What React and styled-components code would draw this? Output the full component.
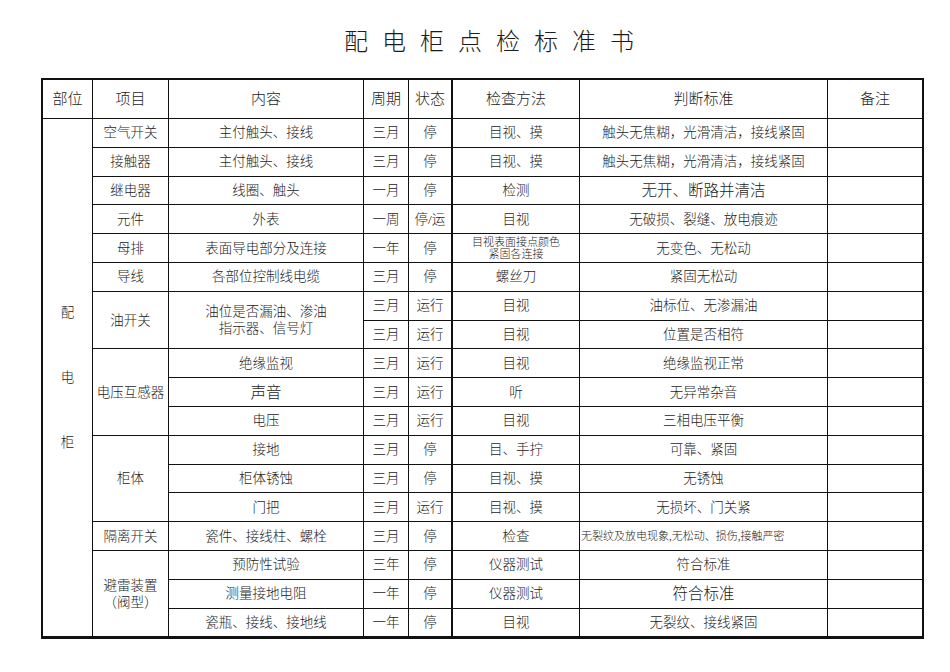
import React from 'react';
import styled, { createGlobalStyle } from 'styled-components';

const Global = createGlobalStyle`
  html, body { margin: 0; padding: 0; background: #fff; }
  body { font-family: "Liberation Serif", "Noto Sans CJK SC", serif; color: #1c1c1c; }
`;

const Page = styled.div`
  width: 950px;
  height: 672px;
  display: flex;
  flex-direction: column;
  box-sizing: border-box;
  padding-top: 27px;
`;

const Title = styled.h1`
  margin: 0 0 21px 0;
  padding-left: 42px;
  font-size: 24px;
  line-height: 30px;
  font-weight: 300;
  letter-spacing: 14px;
  text-align: center;
`;

const Sheet = styled.div`
  margin-left: 41px;
  width: 883px;
  box-sizing: border-box;
  border: 2px solid #111;
  border-right-width: 1px;
  display: grid;
  grid-template-columns: 50px 76px 195px 45px 44px 127px 248px 1fr;
  grid-template-rows: 39px repeat(18, 28.8px);
`;

const sizes = { sm: '11px', md: '13.5px', lg: '15.5px', hd: '15px' };

const Cell = styled.div`
  grid-row: span ${(p) => p.$span || 1};
  box-sizing: border-box;
  display: flex;
  align-items: center;
  justify-content: ${(p) => (p.$align === 'left' ? 'flex-start' : 'center')};
  text-align: center;
  white-space: pre-line;
  padding: 0 ${(p) => (p.$align === 'left' ? '1px' : '2px')};
  border-right: ${(p) => (p.$thick ? 2 : 1)}px solid #111;
  border-bottom: 1px solid #111;
  font-size: ${(p) => sizes[p.$size || 'md']};
  line-height: ${(p) => (p.$size === 'sm' ? '12.5px' : '17px')};
  font-weight: 300;
  overflow: hidden;
`;

const PartCell = styled(Cell)`
  flex-direction: column;
  gap: 49px;
  line-height: 16px;
`;

const headers = ['部位', '项目', '内容', '周期', '状态', '检查方法', '判断标准', '备注'];

const rows = [
  { item: '空气开关', content: '主付触头、接线', period: '三月', state: '停', method: '目视、摸', std: '触头无焦糊，光滑清洁，接线紧固' },
  { item: '接触器', content: '主付触头、接线', period: '三月', state: '停', method: '目视、摸', std: '触头无焦糊，光滑清洁，接线紧固' },
  { item: '继电器', content: '线圈、触头', period: '一月', state: '停', method: '检测', std: { t: '无开、断路并清洁', size: 'lg' } },
  { item: '元件', content: '外表', period: '一周', state: '停/运', method: '目视', std: '无破损、裂缝、放电痕迹' },
  { item: '母排', content: '表面导电部分及连接', period: '一年', state: '停', method: { t: '目视表面接点颜色\n紧固各连接', size: 'sm' }, std: '无变色、无松动' },
  { item: '导线', content: '各部位控制线电缆', period: '三月', state: '停', method: '螺丝刀', std: '紧固无松动' },
  { item: { t: '油开关', span: 2 }, content: { t: '油位是否漏油、渗油\n指示器、信号灯', span: 2 }, period: '三月', state: '运行', method: '目视', std: '油标位、无渗漏油' },
  { item: null, content: null, period: '三月', state: '运行', method: '目视', std: '位置是否相符' },
  { item: { t: '电压互感器', span: 3 }, content: '绝缘监视', period: '三月', state: '运行', method: '目视', std: '绝缘监视正常' },
  { item: null, content: { t: '声音', size: 'lg' }, period: '三月', state: '运行', method: '听', std: '无异常杂音' },
  { item: null, content: '电压', period: '三月', state: '运行', method: '目视', std: '三相电压平衡' },
  { item: { t: '柜体', span: 3 }, content: '接地', period: '三月', state: '停', method: '目、手拧', std: '可靠、紧固' },
  { item: null, content: '柜体锈蚀', period: '三月', state: '停', method: '目视、摸', std: '无锈蚀' },
  { item: null, content: '门把', period: '三月', state: '运行', method: '目视、摸', std: '无损坏、门关紧' },
  { item: '隔离开关', content: '瓷件、接线柱、螺栓', period: '三月', state: '停', method: '检查', std: { t: '无裂纹及放电现象,无松动、损伤,接触严密', size: 'sm', align: 'left' } },
  { item: { t: '避雷装置\n（阀型）', span: 3 }, content: '预防性试验', period: '三年', state: '停', method: '仪器测试', std: '符合标准' },
  { item: null, content: '测量接地电阻', period: '一年', state: '停', method: '仪器测试', std: { t: '符合标准', size: 'lg' } },
  { item: null, content: '瓷瓶、接线、接地线', period: '一年', state: '停', method: '目视', std: '无裂纹、接线紧固' },
];

const norm = (v) => (typeof v === 'string' ? { t: v } : v);

function Field({ value, thick }) {
  if (value === null || value === undefined) return null;
  const v = norm(value);
  return (
    <Cell $span={v.span} $size={v.size} $align={v.align} $thick={thick}>
      {v.t}
    </Cell>
  );
}

export default function App() {
  return (
    <Page>
      <Global />
      <Title>配电柜点检标准书</Title>
      <Sheet>
        {headers.map((h, i) => (
          <Cell key={h} $size="hd" $thick={i === 4}>
            {h}
          </Cell>
        ))}
        <PartCell $span={18}>
          <span>配</span>
          <span>电</span>
          <span>柜</span>
        </PartCell>
        {rows.map((r, i) => (
          <React.Fragment key={i}>
            <Field value={r.item} />
            <Field value={r.content} />
            <Field value={r.period} />
            <Field value={r.state} thick />
            <Field value={r.method} />
            <Field value={r.std} />
            <Field value="" />
          </React.Fragment>
        ))}
      </Sheet>
    </Page>
  );
}
